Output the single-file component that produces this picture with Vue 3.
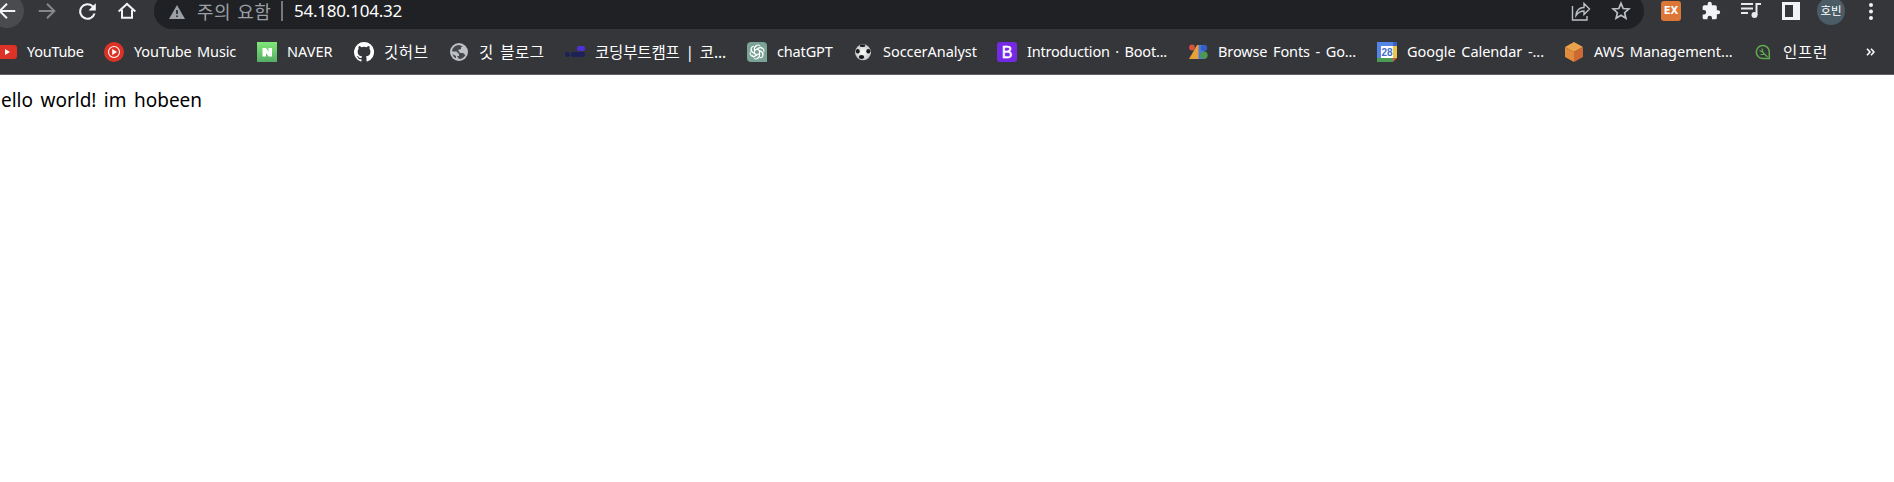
<script setup>
const bookmarks = [
  { id: 'youtube', label: 'YouTube', width: 107, spacing: -0.28 },
  { id: 'music', label: 'YouTube Music', width: 153, spacing: -0.16 },
  { id: 'naver', label: 'NAVER', width: 97, spacing: 0 },
  { id: 'github', label: '깃허브', width: 95, spacing: 0.6, korean: true },
  { id: 'globe', label: '깃 블로그', width: 116, spacing: 0.5, korean: true },
  { id: 'camp', label: '코딩부트캠프 | 코...', width: 182, spacing: -0.15, korean: true },
  { id: 'gpt', label: 'chatGPT', width: 106, spacing: -0.15 },
  { id: 'soccer', label: 'SoccerAnalyst', width: 144, spacing: -0.05 },
  { id: 'boot', label: 'Introduction · Boot...', width: 191, spacing: -0.2 },
  { id: 'fonts', label: 'Browse Fonts - Go...', width: 189, spacing: -0.12 },
  { id: 'calendar', label: 'Google Calendar -...', width: 187, spacing: -0.05 },
  { id: 'aws', label: 'AWS Management...', width: 189, spacing: -0.02 },
  { id: 'inflearn', label: '인프런', width: 110, spacing: 0.7, korean: true },
]
const petals = [0, 60, 120, 180, 240, 300]
</script>

<template>
  <div class="browser">
    <header class="toolbar">
      <nav class="nav">
        <button class="round back"><svg viewBox="0 0 24 24"><path d="M21 12H4M12 4l-8 8 8 8" /></svg></button>
        <button class="round forward"><svg viewBox="0 0 24 24"><path d="M3 12h17M12 4l8 8-8 8" /></svg></button>
        <button class="round"><svg class="solid" viewBox="0 0 24 24"><path d="M17.65 6.35A8 8 0 1 0 19.73 14h-2.08A6 6 0 1 1 12 6c1.66 0 3.14.69 4.22 1.78L13 11h7V4z" /></svg></button>
        <button class="round"><svg class="home" viewBox="0 0 24 24"><path d="M2 12.500 12 3.500l10 9M6 10.500V20h12v-9.500" /></svg></button>
      </nav>
      <div class="address">
        <svg class="warn" viewBox="0 0 16 14"><path fill="#9aa0a6" d="M8 0l8 14H0z" /><path stroke="#202124" stroke-width="1.6" d="M8 5v4M8 10.4V12" /></svg>
        <span class="notice">주의 요함</span>
        <span class="divider"></span>
        <span class="url">54.180.104.32</span>
        <svg class="share" viewBox="0 0 20 20"><path d="M1.500 5v14h14.500v-4M5 14.500c.5-5 3-8 8-8V2.500l5.500 5.500-5.500 5.500V10c-3 0-5.500 1-8 4.500z" /></svg>
        <svg class="star" viewBox="0 0 20 20"><path d="M10 2.300l2.200 5.200 5.700.5-4.300 3.700 1.300 5.500L10 14.300l-4.900 2.900 1.300-5.500L2.100 8l5.700-.5z" /></svg>
      </div>
      <div class="extensions">
        <span class="ex">EX</span>
        <svg viewBox="0 0 24 24"><path fill="#f1f3f4" d="M20.500 11H19V7a2 2 0 0 0-2-2h-4V3.500a2.500 2.500 0 0 0-5 0V5H4a2 2 0 0 0-2 2v3.800h1.500a2.700 2.700 0 0 1 0 5.400H2V20c0 1.100.9 2 2 2h3.800v-1.500a2.700 2.700 0 0 1 5.400 0V22H17a2 2 0 0 0 2-2v-4h1.500a2.500 2.500 0 0 0 0-5z" /></svg>
        <svg viewBox="0 0 20 20"><path fill="none" stroke="#e8eaed" stroke-width="2" d="M0 3h12M0 7.500h12M0 12h7M15.500 14V3H20" /><circle cx="13.500" cy="14" r="3" fill="#e8eaed" /></svg>
        <svg viewBox="0 0 20 20"><path fill="#f1f3f4" fill-rule="evenodd" d="M1 1h18v18H1zM4 4v12h8V4z" /></svg>
        <span class="avatar">호빈</span>
        <svg viewBox="0 0 20 20" fill="#f1f3f4"><circle cx="10" cy="4" r="2" /><circle cx="10" cy="10.500" r="2" /><circle cx="10" cy="17" r="2" /></svg>
      </div>
    </header>

    <div class="bookmarks">
      <a v-for="b in bookmarks" :key="b.id" class="bookmark" :style="{ width: b.width + 'px' }">
        <svg class="favicon" viewBox="0 0 20 20">
          <g v-if="b.id === 'youtube'"><rect y="3" width="20" height="14" rx="3" fill="#dd3226" /><path fill="#fff" d="M8 7l5 3-5 3z" /></g>
          <g v-else-if="b.id === 'music'"><circle cx="10" cy="10" r="10" fill="#dd3226" /><circle cx="10" cy="10" r="5.500" fill="none" stroke="#fff" stroke-width="1.100" /><path fill="#fff" d="M8.200 7l4.800 3-4.800 3z" /></g>
          <g v-else-if="b.id === 'naver'">
            <linearGradient id="naver-green" x2="0" y2="1"><stop stop-color="#80e878" /><stop offset="1" stop-color="#55ad65" /></linearGradient>
            <rect width="20" height="20" fill="url(#naver-green)" /><path fill="#fff" d="M5.500 6H9l2.500 3.500V6H15v8.500h-3.500L9 11v3.500H5.500z" />
          </g>
          <path v-else-if="b.id === 'github'" transform="scale(1.250)" fill="#fff" d="M8 0a8 8 0 0 0-2.530 15.590c.4.070.55-.17.550-.38v-1.490c-2.010.37-2.530-.49-2.690-.94-.09-.23-.48-.94-.82-1.130-.28-.15-.68-.52-.01-.53.63-.01 1.080.58 1.230.82.720 1.210 1.870.87 2.330.66.070-.52.280-.87.510-1.070-1.780-.2-3.640-.89-3.640-3.950 0-.87.310-1.590.820-2.150-.08-.2-.36-1.020.080-2.120 0 0 .67-.21 2.200.82a7.600 7.600 0 0 1 4 0c1.530-1.040 2.200-.82 2.200-.82.440 1.100.160 1.920.080 2.120.510.560.820 1.270.820 2.150 0 3.070-1.870 3.750-3.650 3.950.290.250.540.730.540 1.480v2.200c0 .21.150.46.550.38A8 8 0 0 0 8 0z" />
          <g v-else-if="b.id === 'globe'"><circle cx="10" cy="10" r="9" fill="#bdc1c6" /><path fill="#45474b" d="M10 3a7 7 0 0 0-7 6.500h4.500L10 12v2H8l2 3a7 7 0 0 0 6.300-4L14 11h-3L9 8l3-1V5h2a7 7 0 0 0-4-2zM3.300 12A7 7 0 0 0 7 16.300V14z" /></g>
          <g v-else-if="b.id === 'camp'"><rect x="12" y="4" width="8" height="5" rx="2" fill="#5030d8" /><rect y="10" width="5" height="5" rx="2.300" fill="#1c2159" /><rect x="6" y="10" width="14" height="5" rx="2.300" fill="#1c2159" /></g>
          <g v-else-if="b.id === 'gpt'">
            <path fill="#7ba395" d="M4 0h12a4 4 0 0 1 4 4v16H4a4 4 0 0 1-4-4V4a4 4 0 0 1 4-4z" />
            <path v-for="a in petals" :key="a" :transform="`rotate(${a} 10 10)`" fill="none" stroke="#fff" stroke-width="1" d="M7.500 11.500V6.200a3.300 3.300 0 0 1 6-1.800M7.500 8.500l4-2.400a3.300 3.300 0 0 1 4 .8" />
          </g>
          <g v-else-if="b.id === 'soccer'">
            <radialGradient id="ball"><stop stop-color="#fff" /><stop offset="1" stop-color="#c5c5c5" /></radialGradient>
            <circle cx="10" cy="10.300" r="8" fill="url(#ball)" /><ellipse cx="9.500" cy="3.800" rx="2.800" ry="1.200" fill="#17191b" /><ellipse cx="4.800" cy="9.200" rx="1.900" ry="2.200" fill="#17191b" /><ellipse cx="15.300" cy="9.200" rx="2" ry="2.300" fill="#17191b" /><ellipse cx="8.500" cy="15" rx="2.700" ry="1.900" fill="#17191b" />
          </g>
          <g v-else-if="b.id === 'boot'"><rect width="20" height="20" rx="3" fill="#7629e5" /><text x="4.800" y="15.800" class="boot-letter">B</text></g>
          <g v-else-if="b.id === 'fonts'"><path fill="#e5a039" d="M9 3h3v14H1z" /><path fill="#4c79df" d="M10.500 3H16v14h-5.500z" /><circle cx="4" cy="5.500" r="2.900" fill="#d95140" /><circle cx="16" cy="6" r="3.200" fill="#345fc4" /><circle cx="16" cy="13.200" r="3.700" fill="#4c9a50" /></g>
          <g v-else-if="b.id === 'calendar'"><path fill="#5685e8" d="M0 0h17v4H4v13H0z" /><path fill="#3762c7" d="M16 0h4v4h-4z" /><path fill="#f0c34b" d="M16 4h4v12h-4z" /><path fill="#4c9b54" d="M0 16h16v4H0z" /><path fill="#dc5140" d="M16 16h4l-4 4z" /><path fill="#fff" d="M4 4h12v12H4z" /><text x="4.500" y="13.800" class="date">28</text></g>
          <g v-else-if="b.id === 'aws'"><path fill="#e9a34c" d="M10 0l9 5-9 5-9-5z" /><path fill="#e18b3c" d="M1 5l9 5v10l-9-5z" /><path fill="#ce6932" d="M19 5l-9 5v10l9-5z" /></g>
          <g v-else fill="none" stroke="#60a94e" stroke-width="1.500"><path d="M16.300 16.500V10A6.500 6.500 0 1 0 10 16.500z" /><path d="M6.500 8.500l3 1.500 5 5M9 6.500l1 4M7.500 12.500h4" stroke-width="1.200" /></g>
        </svg>
        <span class="label" :class="{ korean: b.korean }" :style="{ letterSpacing: b.spacing + 'px' }">{{ b.label }}</span>
      </a>
      <svg class="more" viewBox="0 0 9 8"><path d="M1 .8L4 4 1 7.200M5 .8L8 4 5 7.200" /></svg>
    </div>

    <main class="page">ello world! im hobeen</main>
  </div>
</template>

<style>
body { margin: 0; background: #fff; }
</style>

<style scoped>
.browser { height: 482px; overflow: hidden; background: #fff; color: #fff; font-family: "Noto Sans", "Noto Sans CJK KR", sans-serif; }
.toolbar { display: flex; align-items: center; height: 36px; margin-top: -7px; background: #35363a; }
.nav { display: flex; gap: 6px; width: 164px; margin-left: -10px; flex: none; }
.round { display: grid; place-items: center; width: 34px; height: 34px; padding: 0; border: 0; border-radius: 50%; background: none; }
.round svg { width: 22px; height: 22px; fill: none; stroke: #f1f3f4; stroke-width: 2.200; }
.round svg.solid { width: 25px; height: 25px; fill: #f1f3f4; stroke: none; }
.round svg.home { width: 20px; height: 20px; stroke-width: 2.400; }
.round.back { background: #4a4b4f; }
.forward svg { stroke: #85878b; }
.address { display: flex; align-items: center; width: 1490px; height: 36px; flex: none; border-radius: 18px; background: #202124; }
.warn { width: 16px; height: 14px; margin: 2px 0 0 15px; }
.notice { width: 77px; margin-left: 12px; padding-top: 1px; color: #9aa0a6; font-size: 18px; line-height: 22px; letter-spacing: .5px; word-spacing: 1px; white-space: nowrap; }
.divider { width: 2px; height: 20px; margin-left: 7px; background: #75787c; }
.url { margin-left: 11px; font-size: 17px; line-height: 22px; letter-spacing: -.22px; }
.share, .star { width: 20px; height: 20px; fill: none; stroke: #bdc1c6; stroke-width: 1.400; }
.share { margin-left: auto; }
.star { margin: 0 13px 0 20px; stroke-width: 1.700; }
.extensions { display: flex; align-items: center; gap: 20px; margin-left: 17px; }
.extensions svg { width: 20px; height: 20px; }
.ex { width: 20px; height: 20px; border-radius: 3px; background: #dc7737; font: bold 10px/20px "DejaVu Sans", sans-serif; text-align: center; }
.avatar { width: 28px; height: 28px; margin: 0 -4px; border-radius: 50%; background: #4b5c66; font-size: 11.500px; line-height: 27px; text-align: center; }
.bookmarks { display: flex; align-items: center; box-sizing: border-box; height: 46px; border-bottom: 1px solid #606165; background: #35363a; }
.bookmark { display: flex; align-items: center; gap: 10px; height: 45px; flex: none; }
.bookmark:first-child { margin-left: -3px; }
.favicon { width: 20px; height: 20px; flex: none; }
.label { font-size: 14.500px; line-height: 45px; word-spacing: 2px; white-space: nowrap; }
.label.korean { font-size: 15.500px; line-height: 44px; }
.boot-letter { fill: #fff; font: 16px "Liberation Sans", sans-serif; stroke: #fff; stroke-width: .4px; }
.date { fill: #426dcb; font: bold 10px "Liberation Sans", sans-serif; }
.more { width: 9px; height: 8px; margin-left: 3px; fill: none; stroke: #fff; stroke-width: 1.600; }
.page { padding: 11px 0 0 1px; color: #000; font-size: 19px; line-height: 28px; word-spacing: 2.500px; white-space: nowrap; }
</style>
